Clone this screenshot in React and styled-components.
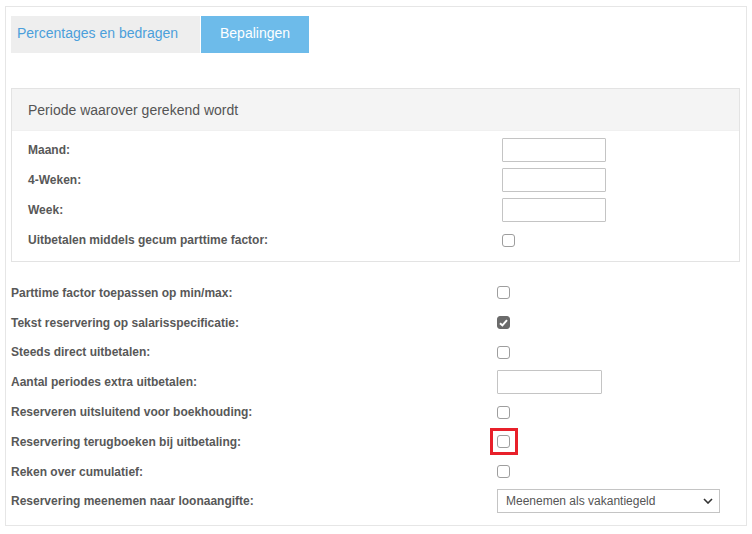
import React from "react";
import styled, { createGlobalStyle } from "styled-components";

const GlobalStyle = createGlobalStyle`
  body {
    margin: 0;
    background: #ffffff;
    font-family: "Liberation Sans", Arial, sans-serif;
  }
`;

const Panel = styled.div`
  margin: 6px 0 0 5px;
  width: 742px;
  height: 520px;
  border: 1px solid #e6e6e6;
  box-sizing: border-box;
  padding: 9px 7px 0 5px;
`;

const Tabs = styled.div`
  display: flex;
  gap: 1px;
  height: 37px;
`;

const Tab = styled.div`
  display: flex;
  align-items: center;
  box-sizing: border-box;
  width: ${props => props.width}px;
  padding-left: ${props => (props.active ? 0 : 6)}px;
  padding-bottom: 3px;
  justify-content: ${props => (props.active ? "center" : "flex-start")};
  background: ${props => (props.active ? "#6dbbea" : "#eeeeee")};
  color: ${props => (props.active ? "#ffffff" : "#4b9fdb")};
  font-size: 14px;
`;

const Section = styled.div`
  margin-top: 35px;
  width: 729px;
  border: 1px solid #e3e3e3;
  box-sizing: border-box;
`;

const SectionHeader = styled.div`
  height: 41px;
  background: #f4f4f4;
  border-bottom: 1px solid #f0f0f0;
  display: flex;
  align-items: center;
  padding-left: 16px;
  font-size: 14px;
  color: #555555;
`;

const SectionBody = styled.div`
  padding: 4px 0 6px 16px;
`;

const Row = styled.div`
  display: flex;
  align-items: center;
  height: ${props => props.h}px;
`;

const Label = styled.div`
  width: ${props => props.w}px;
  flex-shrink: 0;
  font-size: 12px;
  font-weight: bold;
  color: #585858;
`;

const Control = styled.div`
  position: relative;
  display: flex;
  align-items: center;
`;

const TextInput = styled.input`
  width: ${props => props.w}px;
  height: 24px;
  box-sizing: border-box;
  border: 1px solid #c4c4c4;
  border-radius: 1px;
  margin: 0;
  padding: 0 4px;
  font-family: inherit;
`;

const Box = styled.span`
  display: inline-flex;
  align-items: center;
  justify-content: center;
  width: 13px;
  height: 13px;
  box-sizing: border-box;
  border: 1px solid ${props => (props.checked ? "#6b6b6b" : "#9e9e9e")};
  border-radius: 3px;
  background: ${props => (props.checked ? "#6b6b6b" : "#ffffff")};
`;

const Highlight = styled.span`
  position: absolute;
  left: -7px;
  top: -7px;
  width: 28px;
  height: 27px;
  box-sizing: border-box;
  border: 3px solid #e8202a;
`;

const Select = styled.div`
  width: 223px;
  height: 24px;
  box-sizing: border-box;
  border: 1px solid #c4c4c4;
  display: flex;
  align-items: center;
  justify-content: space-between;
  padding: 0 6px 0 8px;
  font-size: 12px;
  color: #555555;
`;

const Lower = styled.div`
  padding-top: 16px;
`;

function Checkbox({ checked, highlight }) {
  return (
    <Control>
      <Box checked={checked}>
        {checked && (
          <svg width="9" height="8" viewBox="0 0 9 8">
            <path d="M1 4.2 L3.4 6.4 L8 1.2" stroke="#fff" strokeWidth="2" fill="none" />
          </svg>
        )}
      </Box>
      {highlight && <Highlight />}
    </Control>
  );
}

const periodRows = [
  { label: "Maand:", type: "input" },
  { label: "4-Weken:", type: "input" },
  { label: "Week:", type: "input" },
  { label: "Uitbetalen middels gecum parttime factor:", type: "check" }
];

const lowerRows = [
  { label: "Parttime factor toepassen op min/max:", type: "check" },
  { label: "Tekst reservering op salarisspecificatie:", type: "check", checked: true },
  { label: "Steeds direct uitbetalen:", type: "check" },
  { label: "Aantal periodes extra uitbetalen:", type: "input" },
  { label: "Reserveren uitsluitend voor boekhouding:", type: "check" },
  { label: "Reservering terugboeken bij uitbetaling:", type: "check", highlight: true },
  { label: "Reken over cumulatief:", type: "check" },
  { label: "Reservering meenemen naar loonaangifte:", type: "select" }
];

function renderControl(row, inputWidth) {
  if (row.type === "input") return <TextInput w={inputWidth} />;
  if (row.type === "select")
    return (
      <Select>
        <span>Meenemen als vakantiegeld</span>
        <svg width="10" height="6" viewBox="0 0 10 6">
          <path d="M1 1 L5 5 L9 1" stroke="#333" strokeWidth="1.6" fill="none" />
        </svg>
      </Select>
    );
  return <Checkbox checked={row.checked} highlight={row.highlight} />;
}

export default function App() {
  return (
    <>
      <GlobalStyle />
      <Panel>
        <Tabs>
          <Tab width={189}>Percentages en bedragen</Tab>
          <Tab width={108} active>
            Bepalingen
          </Tab>
        </Tabs>
        <Section>
          <SectionHeader>Periode waarover gerekend wordt</SectionHeader>
          <SectionBody>
            {periodRows.map(row => (
              <Row key={row.label} h={30}>
                <Label w={474}>{row.label}</Label>
                {renderControl(row, 104)}
              </Row>
            ))}
          </SectionBody>
        </Section>
        <Lower>
          {lowerRows.map(row => (
            <Row key={row.label} h={29.8}>
              <Label w={486}>{row.label}</Label>
              {renderControl(row, 105)}
            </Row>
          ))}
        </Lower>
      </Panel>
    </>
  );
}
